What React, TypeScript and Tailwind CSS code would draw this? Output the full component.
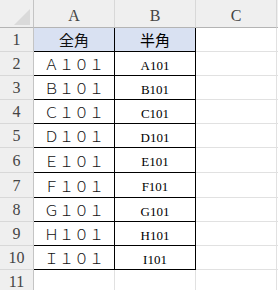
const cols = ["A", "B", "C"];

const rows = [
  { full: "全角", half: "半角", head: true },
  { full: "Ａ１０１", half: "A101" },
  { full: "Ｂ１０１", half: "B101" },
  { full: "Ｃ１０１", half: "C101" },
  { full: "Ｄ１０１", half: "D101" },
  { full: "Ｅ１０１", half: "E101" },
  { full: "Ｆ１０１", half: "F101" },
  { full: "Ｇ１０１", half: "G101" },
  { full: "Ｈ１０１", half: "H101" },
  { full: "Ｉ１０１", half: "I101" },
];

const hdr = "flex items-end justify-center bg-[#efefef] leading-none text-[16px] text-[#444] [font-family:'Liberation_Serif',serif]";
const cjk = "[font-family:'Liberation_Serif','Noto_Sans_CJK_JP',serif]";

export default function App() {
  return (
    <div className="h-[290px] w-[278px] overflow-hidden bg-white">
      <div className="grid grid-cols-[34px_81px_81px_81px_1fr] grid-rows-[28px_24px_24px_24px_24px_24px_25px_25px_24px_24px_24px_24px]">
        {/* corner */}
        <div className="flex items-end justify-end border-r border-b border-r-[#c4c4c4] border-b-[#b4b4b4] bg-[#efefef] pr-[3px] pb-[2px]">
          <svg width="16" height="16" viewBox="0 0 16 16">
            <polygon points="0,16 16,0 16,16" fill="#dadada" />
          </svg>
        </div>
        {cols.map((c) => (
          <div key={c} className={`${hdr} border-r border-b border-r-[#d8d8d8] border-b-[#b4b4b4] pb-[3px]`}>
            {c}
          </div>
        ))}
        <div className="border-b border-b-[#b4b4b4] bg-[#efefef]" />

        {rows.map((r, i) => (
          <div key={i} className="contents">
            <div className={`${hdr} border-r border-b border-r-[#c4c4c4] border-b-[#d8d8d8] pb-[3px]`}>{i + 1}</div>
            <div
              className={`flex items-center justify-center border-r border-b border-black pt-[4px] text-[15px] text-[#111] ${cjk} ${
                r.head ? "bg-[#d9e1f2]" : "font-light"
              }`}
            >
              {r.full}
            </div>
            <div
              className={`flex items-center justify-center border-r border-b border-black pt-[4px] text-black ${cjk} ${
                r.head ? "bg-[#d9e1f2] text-[15px]" : "text-[13px]"
              }`}
            >
              {r.half}
            </div>
            <div className="border-r border-b border-[#e1e1e1]" />
            <div className="border-b border-[#e1e1e1]" />
          </div>
        ))}

        <div className={`${hdr} border-r border-b border-r-[#c4c4c4] border-b-[#d8d8d8] pb-[3px]`}>11</div>
        <div className="border-r border-b border-[#e1e1e1]" />
        <div className="border-r border-b border-[#e1e1e1]" />
        <div className="border-r border-b border-[#e1e1e1]" />
        <div className="border-b border-[#e1e1e1]" />
      </div>
    </div>
  );
}
